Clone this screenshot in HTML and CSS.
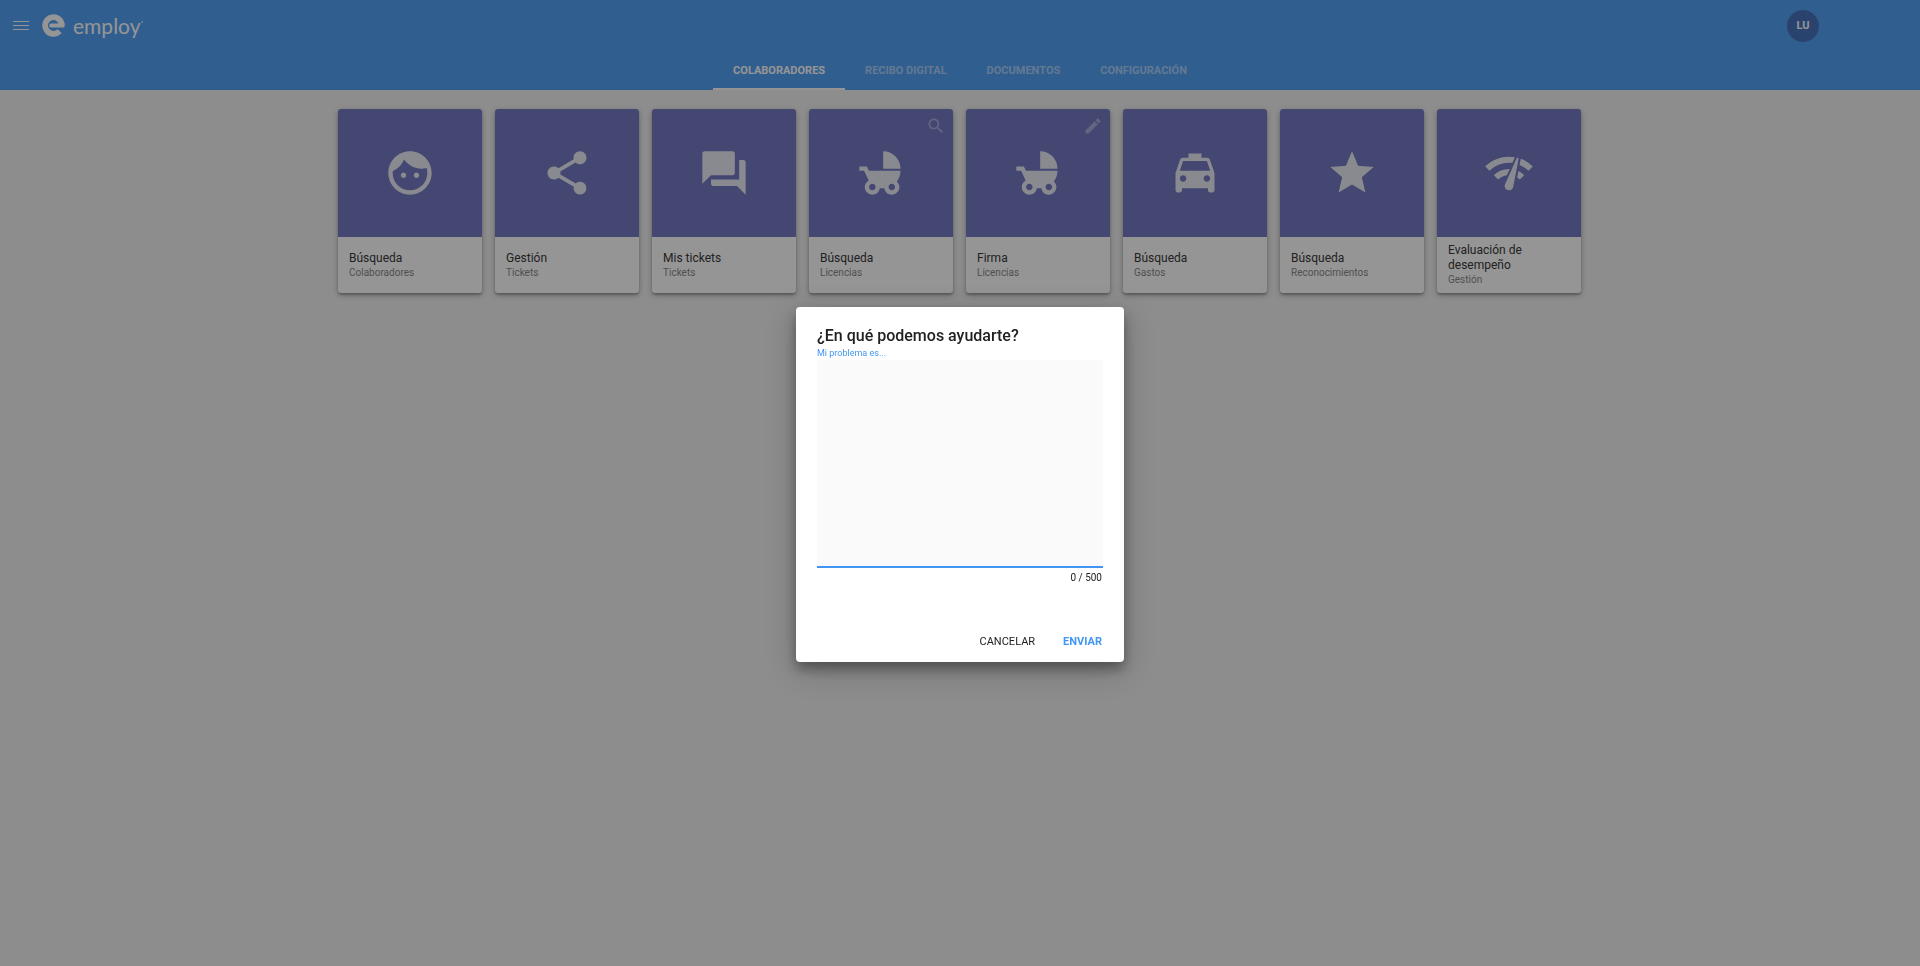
FILE: index.html
```html
<!DOCTYPE html>
<html lang="es">
<head>
<meta charset="utf-8">
<meta name="viewport" content="width=device-width, initial-scale=1">
<title>employ</title>
<link rel="stylesheet" href="styles.css">
</head>
<body>
<svg class="sprite" aria-hidden="true">
  <symbol id="face" viewBox="0 0 24 24"><path d="M9 11.75c-.69 0-1.25.56-1.25 1.25s.56 1.25 1.25 1.25 1.25-.56 1.25-1.25-.56-1.25-1.25-1.25zm6 0c-.69 0-1.25.56-1.25 1.25s.56 1.25 1.25 1.25 1.25-.56 1.25-1.25-.56-1.25-1.25-1.25zM12 2C6.48 2 2 6.48 2 12s4.48 10 10 10 10-4.48 10-10S17.52 2 12 2zm0 18c-4.41 0-8-3.59-8-8 0-.29.02-.58.05-.86 2.36-1.05 4.23-2.98 5.21-5.37C11.07 8.33 14.05 10 17.42 10c.78 0 1.53-.09 2.25-.26.21.71.33 1.47.33 2.26 0 4.41-3.59 8-8 8z"/></symbol>
  <symbol id="share" viewBox="0 0 24 24"><path d="M18 16.08c-.76 0-1.44.3-1.96.77L8.91 12.7c.05-.23.09-.46.09-.7s-.04-.47-.09-.7l7.05-4.11c.54.5 1.25.81 2.04.81 1.66 0 3-1.34 3-3s-1.34-3-3-3-3 1.34-3 3c0 .24.04.47.09.7L8.04 9.81C7.5 9.31 6.79 9 6 9c-1.66 0-3 1.34-3 3s1.34 3 3 3c.79 0 1.5-.31 2.04-.81l7.12 4.16c-.05.21-.08.43-.08.65 0 1.61 1.31 2.92 2.92 2.92s2.92-1.31 2.92-2.92-1.31-2.92-2.92-2.92z"/></symbol>
  <symbol id="chat" viewBox="0 0 24 24"><path d="M21 6h-2v9H6v2c0 .55.45 1 1 1h11l4 4V7c0-.55-.45-1-1-1zm-4 6V3c0-.55-.45-1-1-1H3c-.55 0-1 .45-1 1v14l4-4h10c.55 0 1-.45 1-1z"/></symbol>
  <symbol id="stroller" viewBox="0 0 24 24"><path d="M13 2v8h8c0-4.42-3.58-8-8-8zm6.32 13.89C20.37 14.54 21 12.84 21 11H6.44l-.95-2H2v2h2.22s1.89 4.07 2.12 4.42c-1.1.59-1.84 1.75-1.84 3.08C4.5 20.43 6.07 22 8 22c1.76 0 3.22-1.3 3.46-3h2.08c.24 1.7 1.7 3 3.46 3 1.93 0 3.5-1.57 3.5-3.5 0-1.04-.46-1.97-1.18-2.61zM8 20c-.83 0-1.5-.67-1.5-1.5S7.17 17 8 17s1.5.67 1.5 1.5S8.83 20 8 20zm9 0c-.83 0-1.5-.67-1.5-1.5S16.17 17 17 17s1.5.67 1.5 1.5S17.83 20 17 20z"/></symbol>
  <symbol id="taxi" viewBox="0 0 24 24"><path d="M18.92 6.01C18.72 5.42 18.16 5 17.5 5H15V3H9v2H6.5c-.66 0-1.21.42-1.42 1.01L3 12v8c0 .55.45 1 1 1h1c.55 0 1-.45 1-1v-1h12v1c0 .55.45 1 1 1h1c.55 0 1-.45 1-1v-8l-2.08-5.99zM6.5 16c-.83 0-1.5-.67-1.5-1.5S5.67 13 6.5 13s1.5.67 1.5 1.5S7.33 16 6.5 16zm11 0c-.83 0-1.5-.67-1.5-1.5s.67-1.5 1.5-1.5 1.5.67 1.5 1.5-.67 1.5-1.5 1.5zM5 11l1.5-4.5h11L19 11H5z"/></symbol>
  <symbol id="star" viewBox="0 0 24 24"><path d="M12 17.27L18.18 21l-1.64-7.03L22 9.24l-7.19-.61L12 2 9.19 8.63 2 9.24l5.46 4.73L5.82 21z"/></symbol>
  <symbol id="network" viewBox="0 0 24 24"><path d="M15.9 5c-.17 0-.32.09-.41.23l-.07.15-5.18 11.65c-.16.29-.26.61-.26.96 0 1.11.9 2.01 2.01 2.01.96 0 1.77-.68 1.96-1.59l.01-.03L16.4 5.5c0-.28-.22-.5-.5-.5zM1 9l2 2c2.88-2.88 6.79-4.08 10.53-3.62l1.19-2.68C9.89 3.84 4.74 5.27 1 9zm20 2l2-2c-1.64-1.64-3.55-2.82-5.59-3.57l-.53 2.82c1.5.62 2.9 1.53 4.12 2.75zm-4 4l2-2c-.8-.8-1.7-1.42-2.66-1.89l-.55 2.92c.42.27.83.59 1.21.97zM5 13l2 2c1.13-1.13 2.56-1.79 4.03-2l1.28-2.88c-2.63-.08-5.3.87-7.31 2.88z"/></symbol>
  <symbol id="search" viewBox="0 0 24 24"><path d="M15.5 14h-.79l-.28-.27C15.41 12.59 16 11.11 16 9.5 16 5.91 13.09 3 9.5 3S3 5.91 3 9.5 5.91 16 9.5 16c1.61 0 3.09-.59 4.23-1.57l.27.28v.79l5 4.99L20.49 19l-4.99-5zm-6 0C7.01 14 5 11.99 5 9.5S7.01 5 9.5 5 14 7.01 14 9.5 11.99 14 9.5 14z"/></symbol>
  <symbol id="edit" viewBox="0 0 24 24"><path d="M3 17.25V21h3.75L17.81 9.94l-3.75-3.75L3 17.25zM20.71 7.04c.39-.39.39-1.02 0-1.41l-2.34-2.34c-.39-.39-1.02-.39-1.41 0l-1.83 1.83 3.75 3.75 1.83-1.83z"/></symbol>
</svg>

<header class="header">
  <div class="toolbar">
    <button class="menu" type="button" aria-label="Menú"><span></span><span></span><span></span></button>
    <a class="brand" href="#">
      <svg class="brand-mark" viewBox="0 0 24 24" aria-hidden="true"><path class="ring" d="M20.7 12A8.7 8.7 0 1 0 18.4 17.9"/><path class="bar" d="M9.5 10H23.4a12 12 0 0 1-.2 4H9.5a2 2 0 0 1 0-4z"/></svg>
      <span class="brand-name">employ</span><span class="brand-dot"></span>
    </a>
    <button class="avatar" type="button">LU</button>
  </div>
  <nav class="tabs">
    <a class="tab active" href="#">COLABORADORES</a>
    <a class="tab" href="#">RECIBO DIGITAL</a>
    <a class="tab" href="#">DOCUMENTOS</a>
    <a class="tab" href="#">CONFIGURACIÓN</a>
  </nav>
</header>

<main class="cards">
  <a class="card" href="#"><div class="cover"><svg class="icon"><use href="#face"/></svg></div><div class="info"><h2>Búsqueda</h2><p>Colaboradores</p></div></a>
  <a class="card" href="#"><div class="cover"><svg class="icon"><use href="#share"/></svg></div><div class="info"><h2>Gestión</h2><p>Tickets</p></div></a>
  <a class="card" href="#"><div class="cover"><svg class="icon"><use href="#chat"/></svg></div><div class="info"><h2>Mis tickets</h2><p>Tickets</p></div></a>
  <a class="card" href="#"><div class="cover"><svg class="icon"><use href="#stroller"/></svg><svg class="corner"><use href="#search"/></svg></div><div class="info"><h2>Búsqueda</h2><p>Licencias</p></div></a>
  <a class="card" href="#"><div class="cover"><svg class="icon"><use href="#stroller"/></svg><svg class="corner"><use href="#edit"/></svg></div><div class="info"><h2>Firma</h2><p>Licencias</p></div></a>
  <a class="card" href="#"><div class="cover"><svg class="icon"><use href="#taxi"/></svg></div><div class="info"><h2>Búsqueda</h2><p>Gastos</p></div></a>
  <a class="card" href="#"><div class="cover"><svg class="icon"><use href="#star"/></svg></div><div class="info"><h2>Búsqueda</h2><p>Reconocimientos</p></div></a>
  <a class="card" href="#"><div class="cover"><svg class="icon"><use href="#network"/></svg></div><div class="info"><h2>Evaluación de desempeño</h2><p>Gestión</p></div></a>
</main>

<div class="overlay">
  <form class="dialog" role="dialog" aria-labelledby="dialog-title">
    <h1 id="dialog-title">¿En qué podemos ayudarte?</h1>
    <div class="field">
      <label for="problem">Mi problema es...</label>
      <textarea id="problem" maxlength="500"></textarea>
      <div class="counter">0 / 500</div>
    </div>
    <div class="actions">
      <button type="button">CANCELAR</button>
      <button class="primary" type="submit">ENVIAR</button>
    </div>
  </form>
</div>
</body>
</html>
```
FILE: styles.css
```css
* { box-sizing: border-box; }
body {
  margin: 0;
  min-height: 100vh;
  background: #f0f0f0;
  font-family: Roboto, "Liberation Sans", sans-serif;
  color: #212121;
}
h1, h2, p { margin: 0; font-weight: 400; }
a { color: inherit; text-decoration: none; }
button { border: 0; background: none; font: inherit; color: inherit; padding: 0; cursor: pointer; }
.sprite { display: none; }

.header { background: #3f96f4; color: #fff; }
.toolbar { display: flex; align-items: center; height: 51px; padding: 0 101px 0 13px; }
.menu { display: flex; flex-direction: column; gap: 3px; width: 16px; }
.menu span { height: 1px; background: #fff; }
.brand { display: flex; align-items: center; margin-left: 13px; margin-right: auto; }
.brand-mark { width: 23px; height: 23px; }
.brand-mark .ring { fill: none; stroke: #fff; stroke-width: 6; }
.brand-mark .bar { fill: #fff; }
.brand-name { margin-left: 8px; font-family: Lato, sans-serif; font-size: 21px; line-height: 24px; }
.brand-dot { width: 2px; height: 2px; margin: 0 0 8px 1px; border-radius: 50%; background: #fff; opacity: .6; }
.avatar { width: 32px; height: 32px; border-radius: 50%; background: #3362b4; font-size: 11px; font-weight: 700; }

.tabs { display: flex; justify-content: center; height: 39px; }
.tab {
  display: flex;
  align-items: center;
  padding: 0 20px;
  border-top: 2px solid transparent;
  border-bottom: 2px solid transparent;
  font-size: 11px;
  font-weight: 700;
  color: rgba(255, 255, 255, .5);
}
.tab.active { color: #fff; border-bottom-color: #fff; }

.cards { display: flex; flex-wrap: wrap; justify-content: center; gap: 13px; padding: 19px 1px 19px 0; }
.card {
  width: 144px;
  border-radius: 3px;
  overflow: hidden;
  background: #fff;
  box-shadow: 0 2px 2px rgba(0, 0, 0, .24), 0 2px 6px rgba(0, 0, 0, .3);
}
.cover { position: relative; display: flex; align-items: center; justify-content: center; height: 128px; background: #626abb; }
.icon { width: 52px; height: 52px; fill: #e9e9f5; }
.corner { position: absolute; top: 7px; right: 7px; width: 20px; height: 20px; fill: rgba(255, 255, 255, .4); }
.info { display: flex; flex-direction: column; justify-content: center; min-height: 56px; padding: 0 11px; }
.info h2 { font-size: 12px; line-height: 15px; }
.info p { font-size: 10px; line-height: 14px; color: #7a7a7a; }

.overlay {
  position: fixed;
  inset: 0;
  display: flex;
  align-items: center;
  justify-content: center;
  padding-top: 3px;
  background: rgba(33, 33, 33, .48);
}
.dialog {
  width: 328px;
  padding: 18px 21px 7px;
  border-radius: 4px;
  background: #fff;
  box-shadow: 0 7px 12px rgba(0, 0, 0, .3), 0 8px 30px rgba(0, 0, 0, .25);
}
.dialog h1 { font-size: 16px; font-weight: 500; line-height: 22px; white-space: nowrap; }
.field { display: flex; flex-direction: column; }
.field label { font-size: 9px; line-height: 13px; color: #4196f3; }
.field textarea {
  height: 208px;
  padding: 8px;
  border: 0;
  border-bottom: 2px solid #4196f3;
  outline: 0;
  resize: none;
  background: #fafafa;
  font: inherit;
  font-size: 12px;
}
.counter { padding-right: 1px; font-size: 10px; line-height: 20px; text-align: right; }
.actions { display: flex; justify-content: flex-end; gap: 28px; margin-top: 39px; padding-right: 1px; }
.actions button { height: 28px; font-size: 11px; }
.actions .primary { font-weight: 700; color: #4196f3; }
```
